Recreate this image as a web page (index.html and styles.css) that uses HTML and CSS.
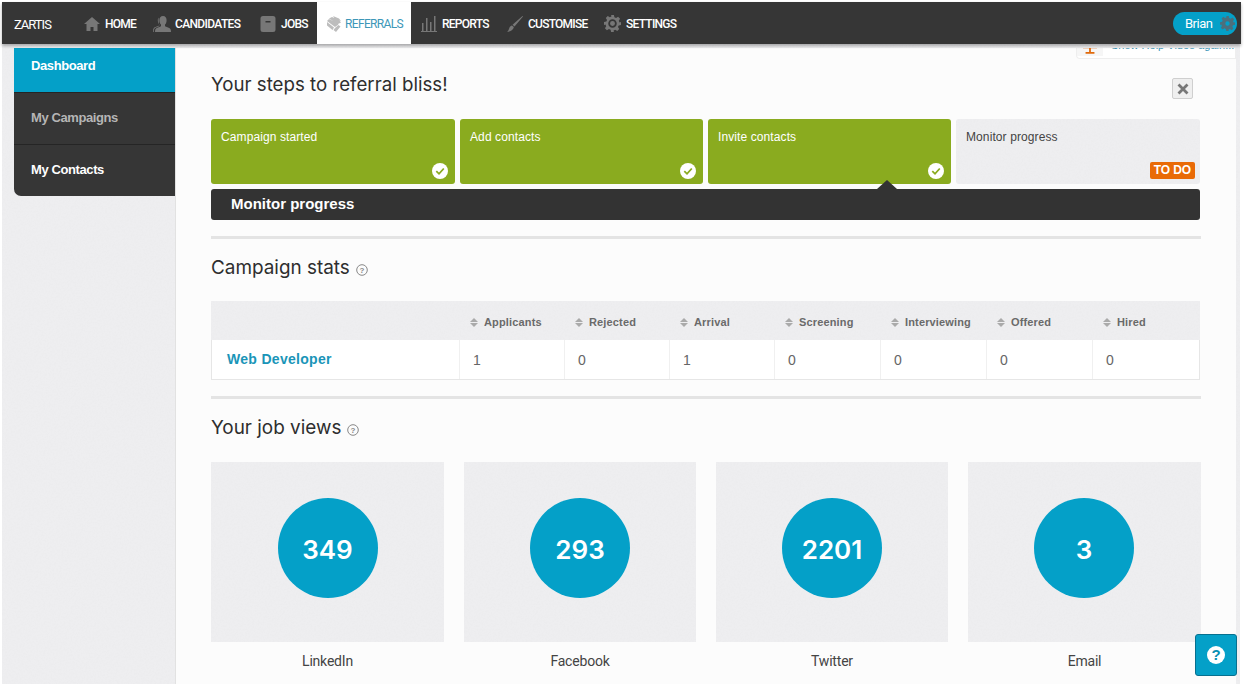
FILE: index.html
```html
<!DOCTYPE html>
<html lang="en">
<head>
<meta charset="utf-8">
<title>Zartis Referrals</title>
<link rel="stylesheet" href="styles.css">
</head>
<body>
<header class="topbar">
  <div class="brand">ZARTIS</div>
  <nav class="nav">
    <a class="nav-item nav-home"><svg class="nav-icon" viewBox="0 0 16 16"><path d="M8 1 0 8h2.500v7h4v-4h3v4h4V8H16z"/></svg>HOME</a>
    <a class="nav-item nav-cand"><svg class="nav-icon nav-icon-wide" viewBox="0 0 18 16"><path d="M10 0c2.400 0 3.600 1.800 3.600 4.200 0 2-.8 3.600-1.600 4.400v1.600l4.200 1.800c1.200.5 1.800 1.500 1.800 4H2c0-2.500.6-3.500 1.800-4L8 10.200V8.600C7.200 7.800 6.400 6.200 6.400 4.200 6.400 1.800 7.600 0 10 0z"/><path d="M5.500 1.500c-.5.800-.7 1.700-.7 2.700 0 1.800.6 3.400 1.500 4.400v.9L1.800 11.200C.6 11.800 0 12.800 0 16h.8c0-2.500.6-3.600 1.800-4.200l3.500-1.500"/></svg>CANDIDATES</a>
    <a class="nav-item nav-jobs"><svg class="nav-icon" viewBox="0 0 16 16"><path fill-rule="evenodd" d="M3 0h10a2.500 2.500 0 0 1 2.500 2.500v11A2.500 2.500 0 0 1 13 16H3a2.500 2.500 0 0 1-2.500-2.500v-11A2.500 2.500 0 0 1 3 0zm2.500 5v1.500h5V5z"/></svg>JOBS</a>
    <a class="nav-item nav-active"><svg class="nav-icon nav-icon-ref" viewBox="0 0 16 16"><path d="M7 0l6 2.500L15 5 9 3zM3 2.500 6 1l7 3 2 2.500-3 1.500zM1 5l2-2 8 4 1.500 1.500L9 11zM1 6l7 5.500L6.500 14 1 9.500zM9 12l3.500-3 2 1.500L10 16 7.500 14z"/></svg>REFERRALS</a>
    <a class="nav-item nav-reports"><svg class="nav-icon" viewBox="0 0 16 16"><path d="M0 15h16v1H0zM1 7h1.500v8H1zM5 2h1.500v13H5zM9 6h1.500v9H9zM13 0h1.500v15H13z"/></svg>REPORTS</a>
    <a class="nav-item nav-cust"><svg class="nav-icon" viewBox="0 0 16 16"><path d="M15.500 0 16 .5 7.500 10.500 5.500 8.800zM5 9.500l1.800 1.600C6.500 14 3 15.800 0 15.800c1.800-1 1.800-2.800 2.500-4.300.5-1 1.500-1.800 2.500-2z"/></svg>CUSTOMISE</a>
    <a class="nav-item nav-set"><svg class="nav-icon" viewBox="0 0 24 24"><path fill-rule="evenodd" d="M10 0h4l.7 3.300 2.300 1 2.900-1.800 2.800 2.800-1.800 2.900 1 2.300L24 10v4l-3.300.7-1 2.300 1.800 2.900-2.800 2.800-2.900-1.800-2.300 1L14 24h-4l-.7-3.300-2.300-1-2.900 1.800-2.800-2.800 1.800-2.900-1-2.300L0 14v-4l3.300-.7 1-2.300L2.500 4.100l2.800-2.800L8.200 3.100l2.300-1zM12 6a6 6 0 1 0 0 12 6 6 0 0 0 0-12zm0 2.500a3.500 3.500 0 1 1 0 7 3.500 3.500 0 0 1 0-7z"/></svg>SETTINGS</a>
  </nav>
  <div class="user">
    <span class="user-name">Brian</span>
    <svg class="user-gear" viewBox="0 0 24 24"><path fill-rule="evenodd" d="M10 0h4l.7 3.300 2.300 1 2.900-1.800 2.800 2.800-1.800 2.900 1 2.300L24 10v4l-3.300.7-1 2.300 1.800 2.900-2.800 2.800-2.900-1.800-2.300 1L14 24h-4l-.7-3.300-2.300-1-2.900 1.800-2.800-2.800 1.800-2.900-1-2.300L0 14v-4l3.300-.7 1-2.300L2.500 4.100l2.800-2.800L8.200 3.100l2.300-1zM12 8.500a3.500 3.500 0 1 0 0 7 3.500 3.500 0 0 0 0-7z"/></svg>
  </div>
</header>

<div class="layout">
  <aside class="sidebar">
    <a class="side-item side-active">Dashboard</a>
    <a class="side-item side-muted">My Campaigns</a>
    <a class="side-item side-last">My Contacts</a>
  </aside>

  <main class="main">
    <div class="help-tab">
      <svg class="help-tab-icon" viewBox="0 0 18 10"><path d="M1 0h16v2h-7v4h4v2H4V6h4V2H1z"/></svg>
      <span class="help-tab-text">Show Help Video again...</span>
    </div>

    <div class="title-row">
      <h1 class="title">Your steps to referral bliss!</h1>
      <button class="close" aria-label="Close"><svg viewBox="0 0 12 12" class="close-icon"><path d="M1.500 1.500l9 9M10.500 1.500l-9 9"/></svg></button>
    </div>

    <div class="steps">
      <div class="step step-done">
        <span>Campaign started</span>
        <svg class="check" viewBox="0 0 16 16"><circle cx="8" cy="8" r="8" fill="#fff"/><path d="M4.300 8.200 7 10.800l4.800-5.300" fill="none" stroke="#8aab1f" stroke-width="1.800"/></svg>
      </div>
      <div class="step step-done">
        <span>Add contacts</span>
        <svg class="check" viewBox="0 0 16 16"><circle cx="8" cy="8" r="8" fill="#fff"/><path d="M4.300 8.200 7 10.800l4.800-5.300" fill="none" stroke="#8aab1f" stroke-width="1.800"/></svg>
      </div>
      <div class="step step-done">
        <span>Invite contacts</span>
        <svg class="check" viewBox="0 0 16 16"><circle cx="8" cy="8" r="8" fill="#fff"/><path d="M4.300 8.200 7 10.800l4.800-5.300" fill="none" stroke="#8aab1f" stroke-width="1.800"/></svg>
      </div>
      <div class="step step-todo texture">
        <span>Monitor progress</span>
        <span class="todo">TO DO</span>
      </div>
    </div>
    <div class="current">Monitor progress</div>

    <h2 class="section section-stats">Campaign stats <svg class="q" viewBox="0 0 12 12"><circle cx="6" cy="6" r="5.300" fill="none" stroke="#888"/><text x="6" y="9" text-anchor="middle" class="q-text">?</text></svg></h2>

    <div class="table">
      <div class="thead texture">
        <div class="th th-first"></div>
        <div class="th"><i class="sort"></i>Applicants</div>
        <div class="th"><i class="sort"></i>Rejected</div>
        <div class="th"><i class="sort"></i>Arrival</div>
        <div class="th"><i class="sort"></i>Screening</div>
        <div class="th"><i class="sort"></i>Interviewing</div>
        <div class="th"><i class="sort"></i>Offered</div>
        <div class="th"><i class="sort"></i>Hired</div>
      </div>
      <div class="trow">
        <div class="td td-first">Web Developer</div>
        <div class="td">1</div>
        <div class="td">0</div>
        <div class="td">1</div>
        <div class="td">0</div>
        <div class="td">0</div>
        <div class="td">0</div>
        <div class="td">0</div>
      </div>
    </div>

    <h2 class="section section-views">Your job views <svg class="q" viewBox="0 0 12 12"><circle cx="6" cy="6" r="5.300" fill="none" stroke="#888"/><text x="6" y="9" text-anchor="middle" class="q-text">?</text></svg></h2>

    <div class="views">
      <div class="view"><div class="view-card texture"><div class="bubble">349</div></div><div class="view-label">LinkedIn</div></div>
      <div class="view"><div class="view-card texture"><div class="bubble">293</div></div><div class="view-label">Facebook</div></div>
      <div class="view"><div class="view-card texture"><div class="bubble">2201</div></div><div class="view-label">Twitter</div></div>
      <div class="view view-last"><div class="view-card texture"><div class="bubble">3</div></div><div class="view-label">Email</div></div>
    </div>
  </main>
</div>

<a class="help-btn" aria-label="Help"><span class="help-btn-mark">?</span></a>
</body>
</html>
```
FILE: styles.css
```css
* { box-sizing: border-box; }
html, body { height: 100%; }
body {
  margin: 0;
  padding: 2px 4px 2px 2px;
  overflow: hidden;
  background: #fff;
  font-family: "Liberation Sans", Arial, sans-serif;
  color: #333;
}
.texture, .layout {
  background-color: #eeeef0;
  background-image: url("data:image/svg+xml,%3Csvg xmlns='http://www.w3.org/2000/svg' width='200' height='200'%3E%3Cfilter id='n'%3E%3CfeTurbulence type='fractalNoise' baseFrequency='.55' numOctaves='2'/%3E%3CfeColorMatrix values='0 0 0 0 .5 0 0 0 0 .5 0 0 0 0 .5 .5 0 0 0 -.2'/%3E%3C/filter%3E%3Crect width='200' height='200' filter='url(%23n)' opacity='.18'/%3E%3C/svg%3E");
}
.topbar {
  position: relative;
  z-index: 2;
  display: flex;
  align-items: center;
  height: 42px;
  margin-right: -1px;
  background: #363636;
  box-shadow: 0 2px 3px rgba(0,0,0,.3);
  font-family: Roboto, sans-serif;
}
.brand { width: 74px; padding: 2px 0 0 12px; color: #fff; font-size: 13px; letter-spacing: -1px; }
.nav { display: flex; align-self: stretch; flex: 1; }
.nav-item {
  display: flex;
  align-items: center;
  gap: 5px;
  padding-top: 2px;
  color: #fff;
  font-size: 12px;
  font-weight: 500;
  letter-spacing: -.75px;
}
.nav-icon { width: 16px; height: 16px; fill: #777; flex: none; margin-top: -1px; }
.nav-icon-wide { width: 18px; }
.nav-icon-ref { fill: #bdbdbd; }
.nav-home { padding-left: 8px; width: 77px; }
.nav-cand { width: 107px; gap: 4px; letter-spacing: -.65px; }
.nav-jobs { width: 57px; }
.nav-active { width: 94px; padding-left: 9px; gap: 3px; background: #fff; color: #3d97b8; font-weight: 400; letter-spacing: -.65px; }
.nav-reports { width: 86px; padding-left: 10px; }
.nav-cust { width: 98px; padding-left: 10px; }
.nav-set { padding-left: 9px; }
.nav-set .nav-icon { width: 17px; height: 17px; }
.user {
  display: flex;
  align-items: center;
  justify-content: space-between;
  width: 64px;
  height: 23px;
  margin-right: 4px;
  padding: 0 2px 0 12px;
  border-radius: 12px;
  background: #04a0c8;
  color: #fff;
  font-size: 13px;
  letter-spacing: -.5px;
}
.user-gear { width: 15px; height: 15px; fill: #4c6f7d; }

.layout { display: flex; height: 640px; padding-top: 4px; }
.sidebar { flex: none; width: 161px; margin-left: 12px; font-size: 13px; font-weight: 700; align-self: flex-start; }
.side-item { display: block; height: 52px; padding-top: 17px; padding-left: 17px; background: #363636; color: #fff; border-bottom: 1px solid #252525; letter-spacing: -.4px; }
.side-active { height: 45px; padding-top: 10px; background: #04a0c8; }
.side-muted { color: #b5b5b5; }
.side-last { height: 51px; border-bottom: 0; border-radius: 0 0 0 7px; }

.main {
  position: relative;
  flex: none;
  width: 1061px;
  padding: 0 35px;
  background: #fcfcfc;
  border-left: 1px solid #e2e2e2;
}
.help-tab {
  position: absolute;
  top: 0;
  right: 0;
  display: flex;
  align-items: flex-start;
  width: 160px;
  height: 11px;
  overflow: hidden;
  background: #fff;
  border: 1px solid #eee;
  border-top: 0;
  border-bottom-left-radius: 4px;
}
.help-tab-icon { width: 26px; height: 10px; padding: 0 5px; margin-top: -2px; fill: #e06a0c; background: #f6f6f6; flex: none; }
.help-tab-text { margin-top: -9px; padding-left: 8px; font-size: 11px; color: #3d97b8; white-space: nowrap; }

.title-row { display: flex; justify-content: space-between; padding: 24px 8px 0 0; height: 71px; }
.title { margin: 0; font-family: Inter, sans-serif; font-size: 18.700px; font-weight: 400; line-height: 26px; color: #2e2e2e; }
.close {
  display: flex;
  align-items: center;
  justify-content: center;
  width: 21px;
  height: 21px;
  margin-top: 6px;
  padding: 0;
  background: #efefef;
  border: 1px solid #cfcfcf;
  border-radius: 2px;
}
.close-icon { width: 12px; height: 12px; fill: none; stroke: #777; stroke-width: 2.800; }

.steps { display: grid; grid-template-columns: 244px 243px 243px 244px; gap: 5px; width: 989px; }
.step {
  position: relative;
  display: flex;
  align-items: flex-end;
  justify-content: flex-end;
  height: 65px;
  padding: 0 6px 5px 10px;
  border-radius: 3px;
  font-size: 12px;
  letter-spacing: .1px;
}
.step > span:first-child { position: absolute; top: 11px; left: 10px; }
.step-done { background: #8aab1f; color: #fff; }
.step-todo { color: #444; padding: 0 5px 5px 10px; }
.check { width: 16px; height: 16px; margin-right: 1px; }
.todo { padding: 1px 4px; border-radius: 2px; background: #e96b07; color: #fff; font-size: 12px; font-weight: 700; line-height: 15px; letter-spacing: -.1px; }
.current {
  position: relative;
  width: 989px;
  height: 31px;
  margin-top: 5px;
  padding-left: 20px;
  background: #333;
  border-radius: 3px;
  color: #fff;
  font-size: 15px;
  font-weight: 700;
  line-height: 30px;
}
.current::before {
  content: "";
  position: absolute;
  top: -9px;
  left: 666px;
  border: 10px solid transparent;
  border-top: 0;
  border-bottom: 9px solid #333;
}
.section {
  margin: 0;
  display: flex;
  align-items: center;
  gap: 6px;
  width: 990px;
  font-family: Inter, sans-serif;
  font-size: 18.900px;
  font-weight: 400;
  color: #2e2e2e;
  border-top: 3px solid #e4e4e4;
}
.section-stats { margin-top: 16px; height: 65px; padding-bottom: 6px; }
.section-views { margin-top: 16px; height: 66px; padding-bottom: 6px; }
.q { width: 12px; height: 12px; margin-top: 5px; flex: none; }
.q-text { font: 700 8px "Liberation Sans", sans-serif; fill: #888; }

.table { width: 989px; border: 1px solid #e6e6e6; border-top: 0; background: #fff; }
.thead, .trow { display: grid; grid-template-columns: 247px 105px 105px 105px 106px 106px 106px 1fr; }
.thead { height: 39px; margin: 0 -1px; }
.th { display: flex; align-items: center; padding-left: 12px; padding-top: 3px; font-size: 11px; font-weight: 700; color: #6a6a6a; letter-spacing: .15px; }
.sort { display: inline-block; position: relative; width: 8px; height: 9px; margin-right: 6px; }
.sort::before, .sort::after { content: ""; position: absolute; left: 0; border: 4px solid transparent; border-top: 0; }
.sort::before { top: 0; border-bottom: 4px solid #aaa; }
.sort::after { bottom: 0; border-top: 4px solid #aaa; border-bottom: 0; }
.trow { height: 39px; }
.td { display: flex; align-items: center; padding-left: 13px; font-size: 14px; color: #666; border-left: 1px solid #f0f0f0; }
.td-first { border-left: 0; padding: 0 0 2px 15px; font-size: 14px; font-weight: 700; color: #1a95b8; letter-spacing: .3px; }

.views { display: grid; grid-template-columns: 233px 232px 232px 233px; column-gap: 20px; width: 990px; }
.view { display: flex; flex-direction: column; align-items: center; }
.view-card { display: flex; align-items: center; justify-content: center; width: 100%; height: 180px; padding-bottom: 8px; }
.view-last .view-card { padding-right: 1px; }
.bubble {
  display: flex;
  align-items: center;
  justify-content: center;
  width: 100px;
  height: 100px;
  padding-top: 3px;
  border-radius: 50%;
  background: #04a0c8;
  color: #fff;
  font-family: Inter, sans-serif;
  font-size: 26px;
  font-weight: 600;
}
.view-label { margin-top: 11px; font-family: Roboto, sans-serif; font-size: 14px; color: #444; letter-spacing: -.2px; }
.help-btn {
  position: fixed;
  left: 1195px;
  top: 634px;
  display: flex;
  align-items: center;
  justify-content: center;
  width: 42px;
  height: 42px;
  background: #04a0c8;
  border: 1px solid #07708f;
  border-radius: 3px;
}
.help-btn-mark {
  width: 18px;
  height: 18px;
  border-radius: 50%;
  background: #fff;
  color: #0a8fb3;
  font-size: 15px;
  font-weight: 700;
  line-height: 18px;
  text-align: center;
}
```
